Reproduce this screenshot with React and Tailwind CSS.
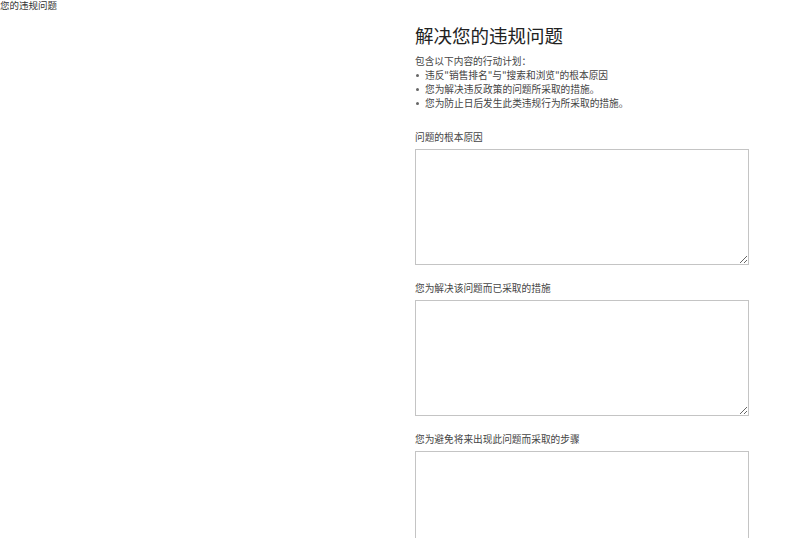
import React from "react";

const fields = [
  "问题的根本原因",
  "您为解决该问题而已采取的措施",
  "您为避免将来出现此问题而采取的步骤",
];

const bullets = [
  '违反"销售排名"与"搜索和浏览"的根本原因',
  "您为解决违反政策的问题所采取的措施。",
  "您为防止日后发生此类违规行为所采取的措施。",
];

export default function App() {
  return (
    <div
      className="relative w-[800px] h-[538px] overflow-hidden bg-white text-[#444]"
      style={{ fontFamily: '"Noto Sans CJK SC", "Noto Sans", sans-serif' }}
    >
      {/* 顶部标题 */}
      <div className="text-[9.5px] leading-[10px] text-[#333]">您的违规问题</div>

      {/* 表单区域 */}
      <div className="pl-[415px] w-[749px]">
        <h1 className="mt-[13px] text-[18.5px] leading-[24px] text-[#222] font-normal">
          解决您的违规问题
        </h1>
        <p className="mt-[7px] text-[9.7px] leading-[14px]">包含以下内容的行动计划：</p>
        <ul className="text-[9.7px] leading-[14px]">
          {bullets.map((b) => (
            <li key={b} className="flex items-center">
              <span className="w-[3px] h-[3px] rounded-full bg-[#666] ml-[1px] mr-[6px]" />
              {b}
            </li>
          ))}
        </ul>
        <div className="mt-[20px] flex flex-col gap-[16px]">
          {fields.map((f) => (
            <div key={f} className="flex flex-col">
              <label className="text-[9.7px] leading-[14px] mb-[5px]">{f}</label>
              <textarea className="w-[334px] h-[116px] border border-[#c4c4c4] bg-white outline-none" />
            </div>
          ))}
        </div>
      </div>
    </div>
  );
}
